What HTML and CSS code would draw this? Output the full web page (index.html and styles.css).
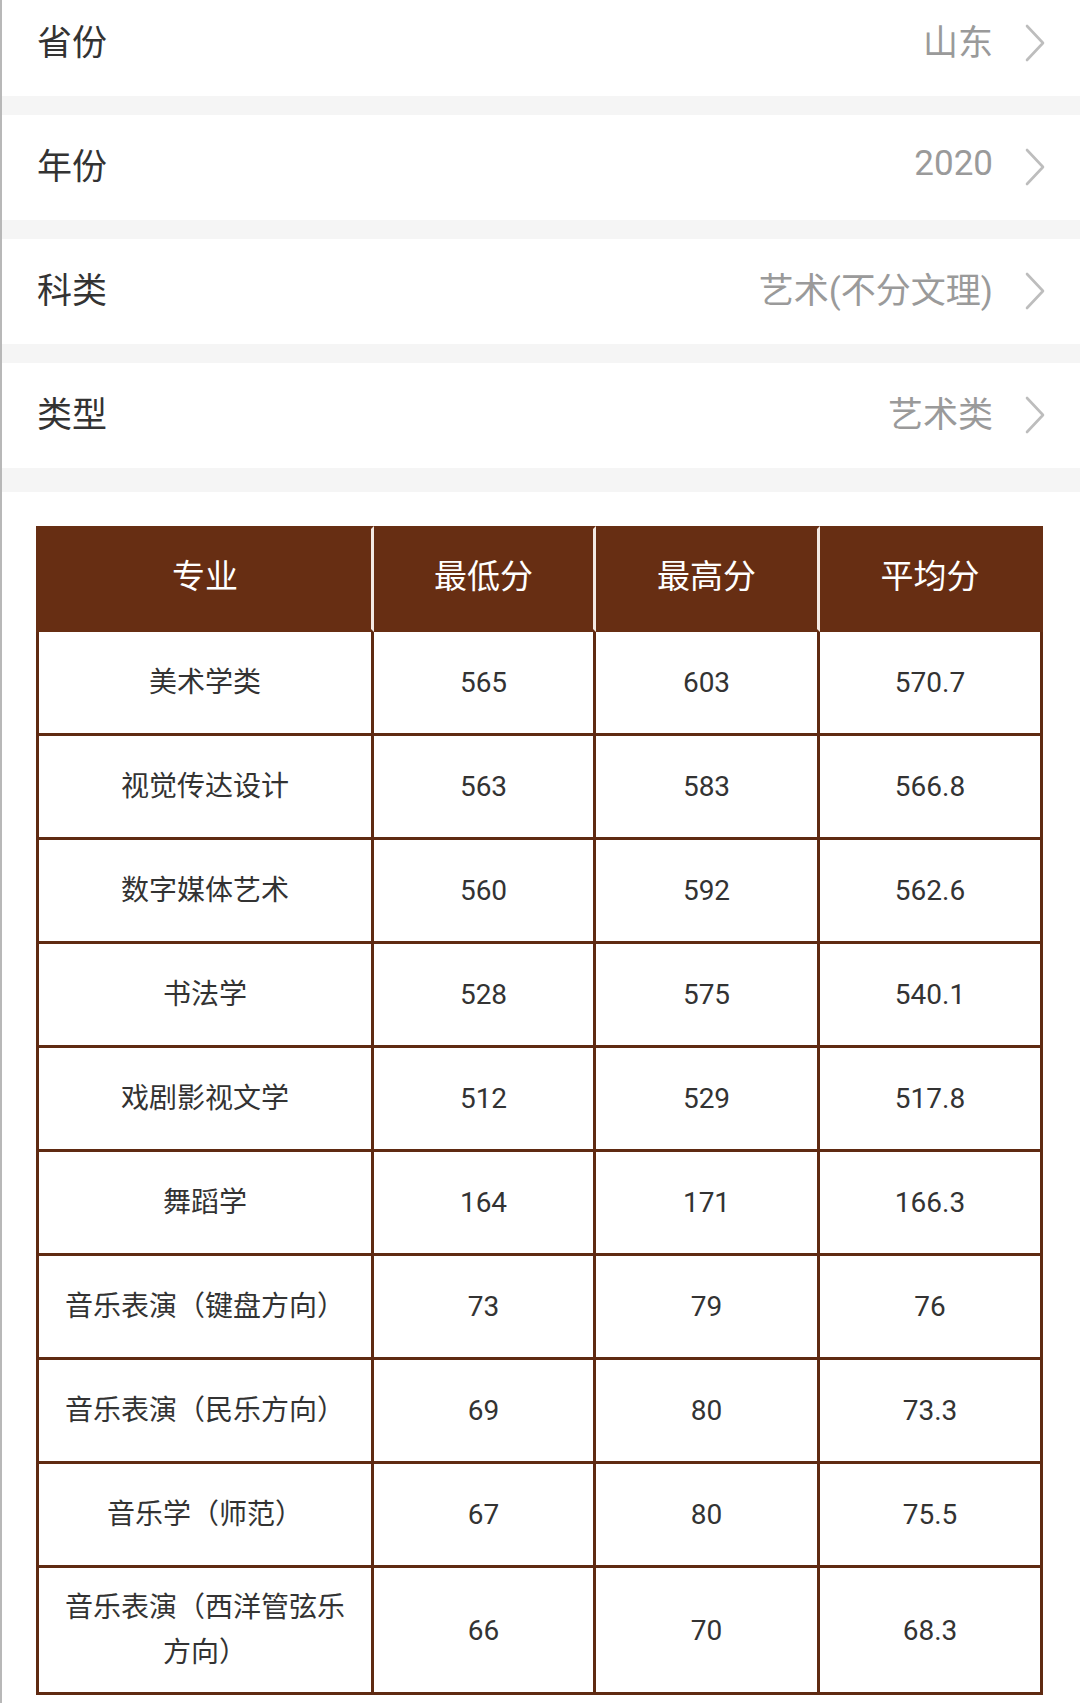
FILE: index.html
```html
<!DOCTYPE html>
<html lang="zh-CN">
<head>
<meta charset="utf-8">
<title>分数线</title>
<link rel="stylesheet" href="styles.css">
</head>
<body>
<div class="page">
  <div class="settings">
    <div class="row">
      <span class="label">省份</span>
      <span class="value">山东</span>
      <svg class="chev" viewBox="0 0 20 38"><path d="M2 2 L18 19 L2 36" /></svg>
    </div>
    <div class="row">
      <span class="label">年份</span>
      <span class="value">2020</span>
      <svg class="chev" viewBox="0 0 20 38"><path d="M2 2 L18 19 L2 36" /></svg>
    </div>
    <div class="row">
      <span class="label">科类</span>
      <span class="value">艺术(不分文理)</span>
      <svg class="chev" viewBox="0 0 20 38"><path d="M2 2 L18 19 L2 36" /></svg>
    </div>
    <div class="row">
      <span class="label">类型</span>
      <span class="value">艺术类</span>
      <svg class="chev" viewBox="0 0 20 38"><path d="M2 2 L18 19 L2 36" /></svg>
    </div>
  </div>

  <div class="table-wrap">
    <table class="scores">
      <colgroup>
        <col class="c1"><col class="c2"><col class="c3"><col class="c4">
      </colgroup>
      <thead>
        <tr><th>专业</th><th>最低分</th><th>最高分</th><th>平均分</th></tr>
      </thead>
      <tbody>
        <tr><td>美术学类</td><td>565</td><td>603</td><td>570.7</td></tr>
        <tr><td>视觉传达设计</td><td>563</td><td>583</td><td>566.8</td></tr>
        <tr><td>数字媒体艺术</td><td>560</td><td>592</td><td>562.6</td></tr>
        <tr><td>书法学</td><td>528</td><td>575</td><td>540.1</td></tr>
        <tr><td>戏剧影视文学</td><td>512</td><td>529</td><td>517.8</td></tr>
        <tr><td>舞蹈学</td><td>164</td><td>171</td><td>166.3</td></tr>
        <tr><td>音乐表演（键盘方向）</td><td>73</td><td>79</td><td>76</td></tr>
        <tr><td>音乐表演（民乐方向）</td><td>69</td><td>80</td><td>73.3</td></tr>
        <tr><td>音乐学（师范）</td><td>67</td><td>80</td><td>75.5</td></tr>
        <tr class="tall"><td>音乐表演（西洋管弦乐方向）</td><td>66</td><td>70</td><td>68.3</td></tr>
      </tbody>
    </table>
  </div>
</div>
</body>
</html>
```

FILE: styles.css
```css
* { box-sizing: border-box; }
html, body {
  margin: 0;
  padding: 0;
  background: #fff;
}
body {
  font-family: Roboto, "Noto Sans CJK SC", sans-serif;
  color: #333;
}
.page {
  width: 1080px;
  min-height: 1703px;
  border-left: 2px solid #b8b8b8;
  overflow: hidden;
}
.settings {
  margin-top: -9px;
  display: flex;
  flex-direction: column;
  background: #f5f5f5;
  padding-bottom: 24px;
  gap: 19px;
}
.row {
  height: 105px;
  background: #fff;
  display: flex;
  align-items: center;
  padding: 0 35px 0 35px;
}
.label {
  font-size: 35px;
  color: #333;
  flex: 1;
  margin-bottom: 8px;
}
.value {
  font-size: 35px;
  color: #9a9a9a;
  margin-right: 32px;
  margin-bottom: 8px;
}
.chev {
  width: 20px;
  height: 38px;
  fill: none;
  stroke: #bdbdbd;
  stroke-width: 2.6;
  stroke-linecap: round;
  stroke-linejoin: round;
  margin-bottom: 2px;
}
.table-wrap {
  padding: 34px 35px 0 34px;
}
.scores {
  width: 1007px;
  table-layout: fixed;
  border-collapse: separate;
  border-spacing: 0;
}
.c1 { width: 338px; }
.c2 { width: 222px; }
.c3 { width: 224px; }
.c4 { width: 223px; }
.scores th,
.scores td {
  text-align: center;
  vertical-align: middle;
  padding: 0 16px;
  border-right: 3px solid #5f2a12;
  border-bottom: 3px solid #5f2a12;
}
.scores th:first-child,
.scores td:first-child {
  border-left: 3px solid #5f2a12;
}
.scores thead tr { height: 106px; }
.scores th {
  background: #672e13;
  color: #fff;
  font-size: 33px;
  font-weight: normal;
  padding-bottom: 10px;
  border-top: 3px solid #672e13;
  border-bottom-color: #672e13;
  border-right-color: #f3e9e3;
}
.scores th:first-child { border-left-color: #672e13; }
.scores th:last-child { border-right-color: #672e13; }
.scores tbody tr { height: 104px; }
.scores tbody tr.tall { height: 127px; }
.scores td {
  font-size: 28px;
  line-height: 45px;
  color: #333;
}
```
